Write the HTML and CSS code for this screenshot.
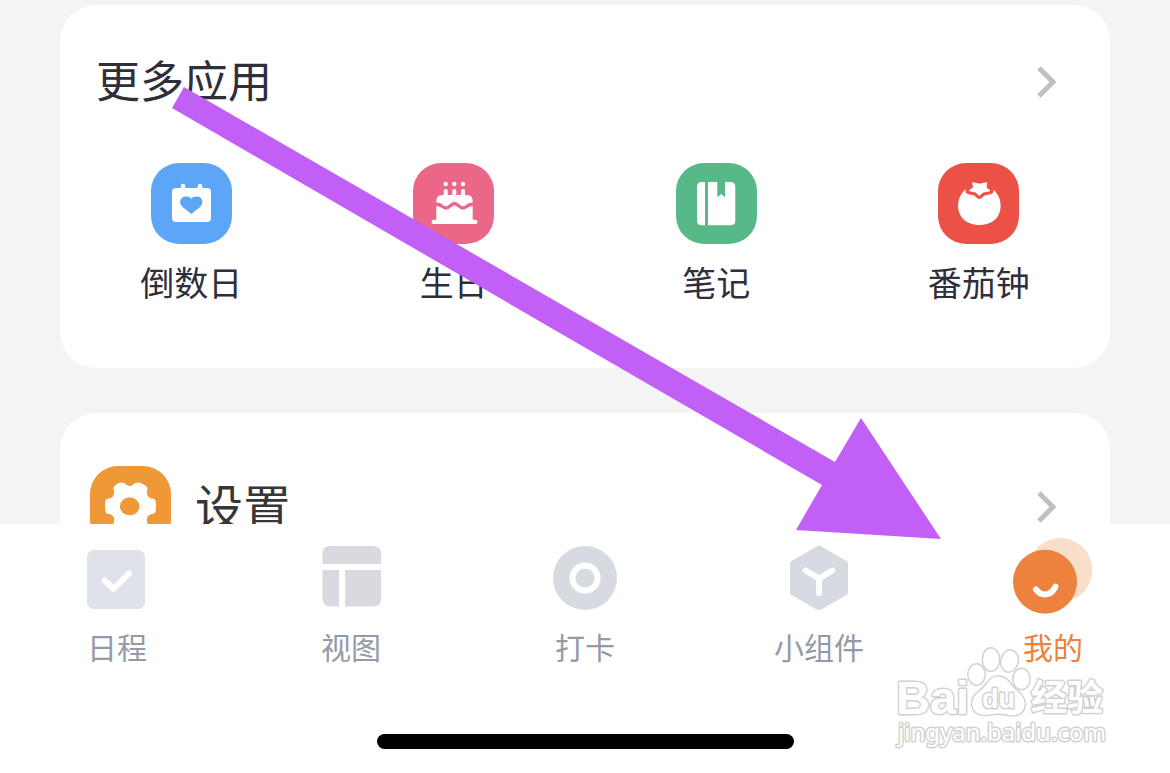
FILE: index.html
```
<!DOCTYPE html>
<html lang="zh-CN">

<head>
    <meta charset="UTF-8">
    <meta name="viewport" content="width=device-width, initial-scale=1.0">
    <title>我的</title>
    <link rel="stylesheet" href="styles.css">
</head>

<body>
    <main>
        <section class="card">
            <a class="card-header" href="#more">
                <h2>更多应用</h2>
                <svg class="chevron" viewBox="0 0 20 32">
                    <path d="M2 2L16 16L2 30" />
                </svg>
            </a>
            <div class="apps">
                <a class="app" href="#countdown">
                    <svg class="app-icon blue" viewBox="0 0 81 81">
                        <rect x="21" y="25" width="39" height="34" rx="4" fill="#fff" />
                        <path d="M32 23V27M49 23V27" stroke="#fff" stroke-width="4.5" stroke-linecap="round" />
                        <path d="M40.300 51L31.500 44C27.500 40 29 34.500 34 33.600C37 33.200 39 34 40.300 35.800C41.600 34 44 33.200 47 33.600C51.800 34.500 53 40 49 44Z" fill="#5ca5f7" />
                    </svg>
                    <span>倒数日</span>
                </a>
                <a class="app" href="#birthday">
                    <svg class="app-icon pink" viewBox="0 0 81 81">
                        <g fill="#fff">
                            <circle cx="32.700" cy="21" r="2.200" />
                            <circle cx="41.300" cy="21" r="2.200" />
                            <circle cx="50" cy="21" r="2.200" />
                            <path d="M30.700 34V27.500Q30.700 26 32.700 26T34.700 27.500V34ZM39.300 34V27.500Q39.300 26 41.300 26T43.300 27.500V34ZM48 34V27.500Q48 26 50 26T52 27.500V34Z" />
                            <path d="M23.300 58V38Q23.300 32 29 32H54Q59.700 32 59.700 38V58Z" />
                            <rect x="18.500" y="56.700" width="46" height="4.300" rx="2" />
                        </g>
                        <path d="M22 41.500C28 40 29 45 33 45C37 45 38 40.500 41.500 40.500C45 40.500 46 45 50 45C54 45 55 40 61 41.500" fill="none" stroke="#ec6687" stroke-width="3.400" />
                    </svg>
                    <span>生日</span>
                </a>
                <a class="app" href="#notes">
                    <svg class="app-icon green" viewBox="0 0 81 81">
                        <path d="M29 19V62.300H26Q21 62.300 21 57.500V24Q21 19 26 19ZM32 19H41.300V34.300L45.200 31L49 34.300V19H54.500Q59.300 19 59.300 24V57.500Q59.300 62.300 54.500 62.300H32Z" fill="#fff" />
                    </svg>
                    <span>笔记</span>
                </a>
                <a class="app" href="#pomodoro">
                    <svg class="app-icon red" viewBox="0 0 81 81">
                        <path d="M28 26C15 36 17 62 41.300 62C66 62 67.500 36 54.700 26Z" fill="#fff" />
                        <path d="M34.700 19.700L41.300 21.500L48.700 19.700L48 24.500L52 27.700L45.500 29L41.300 32.300L37.500 29L31 27.700L35.500 24.500Z" fill="#eb5147" stroke="#eb5147" stroke-width="7" stroke-linejoin="round" />
                        <path d="M34.700 19.700L41.300 21.200L48.700 19.700L48 24.500L52 27.700L45.500 29L41.300 32.300L37.500 29L31 27.700L35.500 24.500Z" fill="#fff" stroke="#fff" stroke-linejoin="round" />
                    </svg>
                    <span>番茄钟</span>
                </a>
            </div>
        </section>

        <section class="card settings">
            <a class="card-header" href="#settings">
                <svg class="app-icon orange" viewBox="0 0 81 81">
                    <path d="M39.700 20C42.500 20 44 16.500 48 16.500C51 16.500 57.500 20 57.500 22.500C57.500 25 56 26.500 57.500 29.500C59.500 33.500 65 32 65.500 34.500Q66.500 40.300 65.500 46.100C65 48.600 59.500 47.100 57.500 51.100C56 54.100 57.500 55.600 57.500 58.100C57.500 60.600 51 64.100 48 64.100C44 64.100 42.500 60.600 39.700 60.600C36.900 60.600 35.400 64.100 31.400 64.100C28.400 64.100 23.500 60.600 23.500 58.100C23.500 55.600 25 54.100 23.500 51.100C21.500 47.100 16 48.600 15.500 46.100Q14.500 40.300 15.500 34.500C16 32 21.500 33.500 23.500 29.500C25 26.500 23.500 25 23.500 22.500C23.500 20 28.400 16.500 31.400 16.500C35.400 16.500 36.900 20 39.700 20Z" fill="#fff" />
                    <ellipse cx="39.700" cy="40.300" rx="9.800" ry="9" fill="#ee9838" />
                </svg>
                <h2>设置</h2>
                <svg class="chevron" viewBox="0 0 20 32">
                    <path d="M2 2L16 16L2 30" />
                </svg>
            </a>
        </section>
    </main>

    <footer>
        <nav class="tabs">
            <button type="button" class="tab">
                <svg class="tab-icon" viewBox="0 0 80 80">
                    <rect x="10" y="12" width="58" height="59" rx="7" fill="#dfe2ea" />
                    <path d="M27.600 42.500L36.700 51L52 35.500" class="line" />
                </svg>
                <span>日程</span>
            </button>
            <button type="button" class="tab">
                <svg class="tab-icon" viewBox="0 0 80 80">
                    <path d="M11.500 26V16Q11.500 8 19.500 8H62Q70 8 70 16V26ZM11.500 32H28V68.500H19.500Q11.500 68.500 11.500 60.500ZM34 32H70V60.500Q70 68.500 62 68.500H34Z" fill="#d8dae0" />
                </svg>
                <span>视图</span>
            </button>
            <button type="button" class="tab">
                <svg class="tab-icon" viewBox="0 0 80 80">
                    <circle cx="40" cy="40" r="32" fill="#d7dae0" />
                    <circle cx="40" cy="40" r="12.600" class="line" />
                </svg>
                <span>打卡</span>
            </button>
            <button type="button" class="tab">
                <svg class="tab-icon" viewBox="0 0 80 80">
                    <path d="M40 10.500L66 25.500V54.500L40 69.500L14 54.500V25.500Z" fill="#d7dae0" stroke="#d7dae0" stroke-width="6" stroke-linejoin="round" />
                    <path d="M26.700 32.500L40 40.500L53.300 32.500M40 40.500V55" class="line" />
                </svg>
                <span>小组件</span>
            </button>
            <button type="button" class="tab active">
                <svg class="tab-icon" viewBox="0 0 80 80">
                    <circle cx="47.300" cy="32" r="32" fill="#f9dfca" />
                    <circle cx="32" cy="43.700" r="32" fill="#ed813e" />
                    <path d="M23 51.500C28 58.500 38 58.500 42.500 48.500" class="line" />
                </svg>
                <span>我的</span>
            </button>
        </nav>
        <div class="home-bar"></div>
    </footer>

    <!-- Guide arrow and site mark, drawn over the page -->
    <svg class="arrow" viewBox="0 0 1170 773">
        <polygon points="184,87 835,462 861,418 941,539 796,530 822,485 172,108" fill="#c25ff7" />
    </svg>
    <svg class="watermark" viewBox="0 0 220 110">
        <g class="mark">
            <ellipse cx="86.500" cy="33.500" rx="8" ry="10" />
            <ellipse cx="101" cy="18.500" rx="8" ry="11" />
            <ellipse cx="119.500" cy="20" rx="8" ry="10.500" transform="rotate(12 119.500 20)" />
            <ellipse cx="131.500" cy="38" rx="8" ry="10" />
            <path d="M108 35.500C99 35.500 97 45 90 50C83 55 80 62 84 69C88 75 97 74 102 73Q108 72 114 73C120 74 129 76 133 69C137 61 133 55 127 50C119 44 118 35.500 108 35.500Z" />
            <text x="6" y="73" class="mark-latin">Bai</text>
            <text x="92" y="67" class="mark-du">du</text>
            <text x="141" y="70" class="mark-cjk">经验</text>
            <text x="8" y="100" class="mark-url">jingyan.baidu.com</text>
        </g>
    </svg>
</body>

</html>
```

FILE: styles.css
```
/* General Styles */
* {
    box-sizing: border-box;
}

body {
    margin: 0;
    height: 100vh;
    display: flex;
    flex-direction: column;
    position: relative;
    overflow: hidden;
    font-family: "Noto Sans CJK SC", sans-serif;
    background-color: #ffffff;
    color: #2f2e3a;
}

/* Main Content */
main {
    flex: 1;
    min-height: 0;
    overflow: hidden;
    display: flex;
    flex-direction: column;
    gap: 45px;
    padding: 5px 60px 0;
    background-color: #f4f4f4;
}

.card {
    flex-shrink: 0;
    padding-bottom: 62px;
    background-color: #ffffff;
    border-radius: 36px;
}

.card-header {
    display: flex;
    align-items: center;
    gap: 24px;
    padding: 45px 53px 0 36px;
    color: inherit;
    text-decoration: none;
}

.card-header h2 {
    flex: 1;
    margin: 0;
    padding-bottom: 6px;
    font-size: 44px;
    font-weight: 400;
    line-height: 58px;
}

.settings .card-header {
    padding: 53px 53px 0 30px;
    color: #373737;
}

.settings .card-header h2 {
    font-size: 48px;
}

.chevron {
    width: 20px;
    height: 32px;
    fill: none;
    stroke: #c0c0c0;
    stroke-width: 5;
}

/* App grid */
.apps {
    display: grid;
    grid-template-columns: repeat(4, 1fr);
    padding-top: 49px;
}

.app {
    display: flex;
    flex-direction: column;
    align-items: center;
    gap: 14px;
    font-size: 34px;
    line-height: 48px;
    color: inherit;
    text-decoration: none;
}

.app-icon {
    width: 81px;
    height: 81px;
    border-radius: 28px;
}

.blue {
    background-color: #5ca5f7;
}

.pink {
    background-color: #ec6687;
}

.green {
    background-color: #57b988;
}

.red {
    background-color: #eb5147;
}

.orange {
    background-color: #ee9838;
}

/* Bottom tabs */
footer {
    display: flex;
    flex-direction: column;
    align-items: center;
    gap: 70px;
    padding: 14px 0 24px;
    background-color: #ffffff;
}

.tabs {
    display: flex;
    width: 100%;
}

.tab {
    flex: 1;
    display: flex;
    flex-direction: column;
    align-items: center;
    gap: 10px;
    padding: 0;
    border: none;
    background: none;
    font-family: inherit;
    font-size: 30px;
    line-height: 36px;
    color: #959aa8;
    cursor: pointer;
}

.tab.active {
    color: #ed813e;
}

.tab-icon {
    width: 80px;
    height: 80px;
}

.line {
    fill: none;
    stroke: #ffffff;
    stroke-width: 6;
    stroke-linecap: round;
    stroke-linejoin: round;
}

.home-bar {
    width: 417px;
    height: 15px;
    border-radius: 8px;
    background-color: #000000;
}

/* Overlays */
.arrow {
    position: absolute;
    top: 0;
    left: 0;
    width: 1170px;
    height: 773px;
    pointer-events: none;
}

.watermark {
    position: absolute;
    right: 60px;
    bottom: 22px;
    width: 220px;
    height: 110px;
    pointer-events: none;
}

.mark {
    fill: #ffffff;
    stroke: #d2d2d2;
    stroke-width: 3;
    stroke-linejoin: round;
    paint-order: stroke;
}

.mark-latin {
    font: bold 47px "Liberation Sans", sans-serif;
}

.mark-du {
    font: bold 27px "Liberation Sans", sans-serif;
}

.mark-cjk {
    font: bold 36px "Noto Sans CJK SC", sans-serif;
}

.mark-url {
    font: 24px "Noto Sans", sans-serif;
}
```
